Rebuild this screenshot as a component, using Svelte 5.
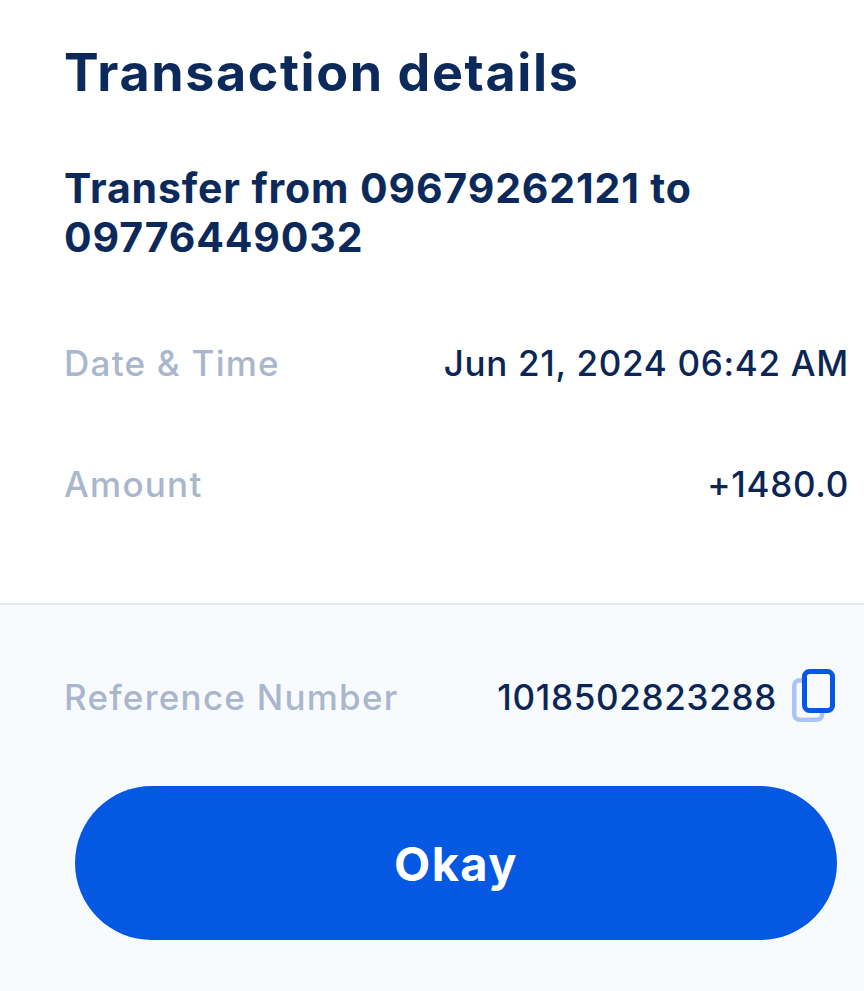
<script lang="ts">
  let details = [
    { label: "Date & Time", value: "Jun 21, 2024 06:42 AM" },
    { label: "Amount", value: "+1480.0" },
  ];
</script>

<div class="sheet">
  <div class="top">
    <h1>Transaction details</h1>
    <h2>Transfer from 09679262121 to 09776449032</h2>
    <div class="rows">
      {#each details as row}
        <div class="row">
          <span class="label">{row.label}</span>
          <span class="value">{row.value}</span>
        </div>
      {/each}
    </div>
  </div>
  <div class="bottom">
    <div class="ref">
      <span class="label">Reference Number</span>
      <span class="ref-right">
        <span class="value">1018502823288</span>
        <svg width="43" height="56" viewBox="0 0 43 56" fill="none">
          <rect x="2.25" y="11.25" width="28" height="39.5" rx="5.5" stroke="#a9c4f5" stroke-width="4.5" />
          <rect x="12.5" y="2.5" width="28" height="39" rx="5" fill="#f8fbfe" stroke="#0458e2" stroke-width="5" />
        </svg>
      </span>
    </div>
    <button type="button" class="okay">Okay</button>
  </div>
</div>

<style>
  :global(body) {
    margin: 0;
    background: #fff;
  }

  .sheet {
    height: 991px;
    display: flex;
    flex-direction: column;
    font-family: "Inter", "Liberation Sans", sans-serif;
    color: #0b2a5b;
  }

  .top {
    height: 605px;
    box-sizing: border-box;
    padding: 41px 15px 0 64px;
    border-bottom: 2px solid #e0eaf0;
  }

  h1 {
    margin: 0;
    font-size: 52px;
    line-height: 64px;
    font-weight: 700;
    letter-spacing: 1.6px;
  }

  h2 {
    margin: 59px 0 0;
    font-size: 41px;
    line-height: 49px;
    font-weight: 700;
    letter-spacing: 0.85px;
  }

  .rows {
    margin-top: 81px;
    display: flex;
    flex-direction: column;
    gap: 81px;
  }

  .row {
    display: flex;
    justify-content: space-between;
    align-items: center;
    height: 40px;
  }

  .label {
    font-size: 35px;
    font-weight: 500;
    color: #a9b6cc;
    letter-spacing: 1.25px;
  }

  .value {
    font-size: 35px;
    font-weight: 500;
    color: #0b2654;
    letter-spacing: 0.7px;
  }

  .bottom {
    flex: 1;
    background: #f8fbfe;
    padding: 0 29px 0 64px;
  }

  .ref {
    display: flex;
    justify-content: space-between;
    align-items: center;
    height: 56px;
    margin-top: 64px;
  }

  .ref-right {
    display: flex;
    align-items: center;
    gap: 15px;
  }

  .okay {
    display: block;
    width: 762px;
    height: 154px;
    margin: 61px 0 0 11px;
    border: none;
    border-radius: 77px;
    background: #0458e2;
    color: #fff;
    font-family: inherit;
    font-size: 47px;
    font-weight: 700;
    letter-spacing: 1.4px;
  }
</style>
